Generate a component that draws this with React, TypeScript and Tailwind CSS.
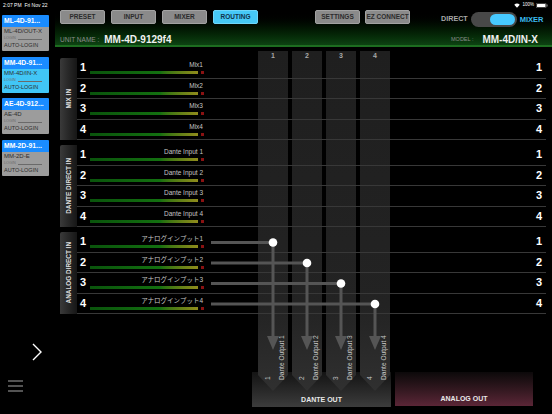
import React from 'react';

type Card = { head: string; model: string; active?: boolean };

const cards: Card[] = [
  { head: 'ML-4D-91...', model: 'ML-4D/OUT-X' },
  { head: 'MM-4D-91...', model: 'MM-4D/IN-X', active: true },
  { head: 'AE-4D-912...', model: 'AE-4D' },
  { head: 'MM-2D-91...', model: 'MM-2D-E' },
];

const groups = [
  { name: 'MIX IN', labels: ['Mix1', 'Mix2', 'Mix3', 'Mix4'] },
  { name: 'DANTE DIRECT IN', labels: ['Dante Input 1', 'Dante Input 2', 'Dante Input 3', 'Dante Input 4'] },
  {
    name: 'ANALOG DIRECT IN',
    labels: ['アナログインプット1', 'アナログインプット2', 'アナログインプット3', 'アナログインプット4'],
  },
];

const cols = [258, 292, 326, 360];
// analog rows -> dante out, y of each route line
const routes = [242.5, 263, 283.5, 304];

const DeviceCard = ({ card }: { card: Card }) => (
  <div className="w-[47px] h-[36px] flex flex-col overflow-hidden rounded-[1px]">
    <div className="h-[12px] bg-[#1a8cff] px-[2px] text-[6.8px] font-bold leading-[12px] text-white whitespace-nowrap">
      {card.head}
    </div>
    <div className={`flex-1 px-[2px] pt-[1px] ${card.active ? 'bg-[#41c6f6]' : 'bg-[#9c9c9c]'}`}>
      <div className="text-[6px] leading-[7px] text-[#2e2e2e] whitespace-nowrap">{card.model}</div>
      <div className="flex items-end h-[6px]">
        <span className="text-[3.8px] leading-[5px] text-[#6e6e6e]">LOGIN</span>
        <div className="ml-[2px] mb-[1px] h-px w-[24px] bg-[#6a6a6a]" />
      </div>
      <div className="mt-[1px] text-[5.5px] leading-[7px] text-[#2e2e2e]">AUTO-LOGIN</div>
    </div>
  </div>
);

const NavButton = ({ label, active }: { label: string; active?: boolean }) => (
  <div
    className={`flex h-[14px] w-[45px] items-center justify-center rounded-[2px] border text-[6.5px] font-bold ${
      active ? 'bg-[#46c8f6] border-[#6fd6fa] text-[#10324a]' : 'bg-[#8a8a8a] border-[#a2a2a2] text-[#2c2c2c]'
    }`}
  >
    {label}
  </div>
);

const Row = ({ n, label }: { n: number; label: string }) => (
  <div className="flex h-[20.5px] items-center border-b border-[#383838]">
    <span className="w-[13px] pl-[3px] text-[11px] font-bold leading-none text-white">{n}</span>
    <div className="flex w-[115px] flex-col">
      <span className="h-[7px] pr-[2px] text-right text-[6.5px] leading-[7px] text-[#c6c6c6] whitespace-nowrap">
        {label}
      </span>
      <div className="mt-[3px] flex items-center">
        <div className="h-[3px] w-[108px] bg-linear-to-r from-[#0a540c] via-[#137010] via-65% to-[#908c1c]" />
        <div className="ml-[3px] h-[3px] w-[3px] bg-[#8a1212]" />
      </div>
    </div>
    <div className="flex-1" />
    <span className="pr-[4px] text-[11px] font-bold leading-none text-white">{n}</span>
  </div>
);

export default function App() {
  return (
    <div className="w-[552px] h-[414px] bg-black overflow-hidden flex flex-col font-['Liberation_Sans','Noto_Sans_CJK_JP',sans-serif] text-white">
      {/* status bar */}
      <div className="h-[10px] flex items-center justify-between px-[3px]">
        <span className="text-[5px] leading-none text-white">2:07 PM&nbsp;&nbsp;Fri Nov 22</span>
        <div className="flex items-center gap-[2px] pr-[1px]">
          <svg width="6" height="5" viewBox="0 0 12 10">
            <path d="M6 9.5 L0.5 3.5 Q6 -1.5 11.5 3.5 Z" fill="white" />
          </svg>
          <span className="text-[4.5px] leading-none">100%</span>
          <svg width="12" height="5" viewBox="0 0 24 10">
            <rect x="0.5" y="0.5" width="20" height="9" rx="2" fill="none" stroke="#aaa" />
            <rect x="2" y="2" width="17" height="6" rx="1" fill="white" />
            <rect x="21.5" y="3" width="1.5" height="4" fill="#aaa" />
          </svg>
        </div>
      </div>

      <div className="flex flex-1">
        {/* sidebar */}
        <div className="w-[55px] flex flex-col pl-[2px] pt-[5px]">
          <div className="flex flex-col gap-[5.5px]">
            {cards.map(c => (
              <DeviceCard key={c.head} card={c} />
            ))}
          </div>
          <div className="mt-auto ml-[29px]">
            <svg width="12" height="18" viewBox="0 0 12 18">
              <polyline points="2,1 10,9 2,17" fill="none" stroke="white" strokeWidth="1.4" />
            </svg>
          </div>
          <div className="mt-[19px] mb-[22px] ml-[6px]">
            <svg width="16" height="12" viewBox="0 0 16 12">
              <line x1="0" y1="1" x2="15" y2="1" stroke="#8a8a8a" strokeWidth="1.2" />
              <line x1="0" y1="6" x2="15" y2="6" stroke="#8a8a8a" strokeWidth="1.2" />
              <line x1="0" y1="11" x2="15" y2="11" stroke="#8a8a8a" strokeWidth="1.2" />
            </svg>
          </div>
        </div>

        {/* main */}
        <div className="relative flex-1 flex flex-col">
          <div className="h-[37px] flex flex-col border-b-2 border-[#1d6d20] bg-linear-to-b from-[#000000] to-[#0d4312] pl-[5px]">
            <div className="flex items-start">
              <div className="flex gap-[6px]">
                <NavButton label="PRESET" />
                <NavButton label="INPUT" />
                <NavButton label="MIXER" />
                <NavButton label="ROUTING" active />
              </div>
              <div className="ml-[57px] flex gap-[5px]">
                <NavButton label="SETTINGS" />
                <NavButton label="EZ CONNECT" />
              </div>
              <div className="ml-[31px] mt-[2px] flex items-center">
                <span className="text-[7.2px] font-bold text-[#a8a8a8]">DIRECT</span>
                <div className="ml-[3px] flex h-[15px] w-[46px] items-center justify-end rounded-full bg-[#484848] pr-[2px]">
                  <div className="h-[11px] w-[25px] rounded-full bg-[#47c9ff]" />
                </div>
                <span className="ml-[3px] text-[7.5px] font-bold text-[#3cbcf0]">MIXER</span>
              </div>
            </div>
            <div className="mt-[5px] flex items-center justify-between pr-[14px]">
              <div className="flex items-center">
                <span className="text-[6.5px] text-[#8c8c8c]">UNIT NAME :</span>
                <span className="ml-[5px] text-[10px] font-bold text-[#f0f0f0]">MM-4D-9129f4</span>
              </div>
              <div className="flex items-center">
                <span className="text-[5.5px] text-[#8c8c8c]">MODEL :</span>
                <span className="ml-[9px] text-[10px] font-bold text-[#f0f0f0]">MM-4D/IN-X</span>
              </div>
            </div>
          </div>

          {/* matrix columns (behind the rows) */}
          <svg className="absolute left-0 top-0" width="497" height="404" viewBox="55 10 497 404">
            <defs>
              <linearGradient id="colg" x1="0" y1="51" x2="0" y2="391" gradientUnits="userSpaceOnUse">
                <stop offset="0" stopColor="#1f1f1f" />
                <stop offset="0.75" stopColor="#232323" />
                <stop offset="1" stopColor="#303030" />
              </linearGradient>
            </defs>
            {cols.map((x, i) => (
              <g key={x}>
                <polygon
                  points={`${x},51 ${x + 30},51 ${x + 30},375 ${x + 15},391 ${x},375`}
                  fill="url(#colg)"
                />
                <text x={x + 15} y="58" textAnchor="middle" fontSize="7" fontWeight="bold" fill="#a8a8a8">
                  {i + 1}
                </text>
                <text transform={`translate(${x + 11.5},380) rotate(-90)`} fontSize="6.6" fill="#c8c8c8">
                  {i + 1}
                </text>
                <text transform={`translate(${x + 26},380) rotate(-90)`} fontSize="6.6" fill="#c8c8c8">
                  {`Dante Output ${i + 1}`}
                </text>
              </g>
            ))}
          </svg>

          {/* input rows */}
          <div className="relative flex flex-col gap-[5px] pl-[5px] pr-[6px] pt-[11px]">
            {groups.map(g => (
              <div key={g.name} className="flex h-[82px]">
                <div className="flex w-[17px] items-center justify-center bg-linear-to-r from-[#3a3a3a] to-[#161616] rounded-tl-[2px]">
                  <span className="[writing-mode:vertical-rl] rotate-180 text-[6.4px] font-bold text-[#dcdcdc] whitespace-nowrap">
                    {g.name}
                  </span>
                </div>
                <div className="flex flex-1 flex-col">
                  {g.labels.map((l, i) => (
                    <Row key={l} n={i + 1} label={l} />
                  ))}
                </div>
              </div>
            ))}
          </div>

          <div className="flex-1" />

          {/* output blocks */}
          <div className="flex gap-[4px] pl-[197px] pb-[7px]">
            <div className="flex h-[35px] w-[139px] items-end justify-center bg-linear-to-b from-[#141414] to-[#3c3c3c] pb-[3px]">
              <span className="text-[7px] font-bold leading-[8px] text-[#e8e8e8]">DANTE OUT</span>
            </div>
            <div className="flex h-[34px] w-[138px] items-end justify-center bg-linear-to-b from-[#0c090a] to-[#5b2637] pb-[3px]">
              <span className="text-[7px] font-bold leading-[8px] text-[#e8e8e8]">ANALOG OUT</span>
            </div>
          </div>

          {/* routing lines */}
          <svg className="absolute left-0 top-0" width="497" height="404" viewBox="55 10 497 404">
            {routes.map((y, i) => {
              const cx = cols[i] + 15;
              return (
                <g key={y}>
                  <line x1="211" y1={y} x2={cx} y2={y} stroke="#555" strokeWidth="3" />
                  <line x1={cx} y1={y} x2={cx} y2="337" stroke="#555" strokeWidth="3" />
                  <polygon points={`${cx - 6},336 ${cx + 6},336 ${cx},350`} fill="#555" />
                  <circle cx={cx} cy={y} r="4.3" fill="white" />
                </g>
              );
            })}
          </svg>
        </div>
      </div>
    </div>
  );
}
